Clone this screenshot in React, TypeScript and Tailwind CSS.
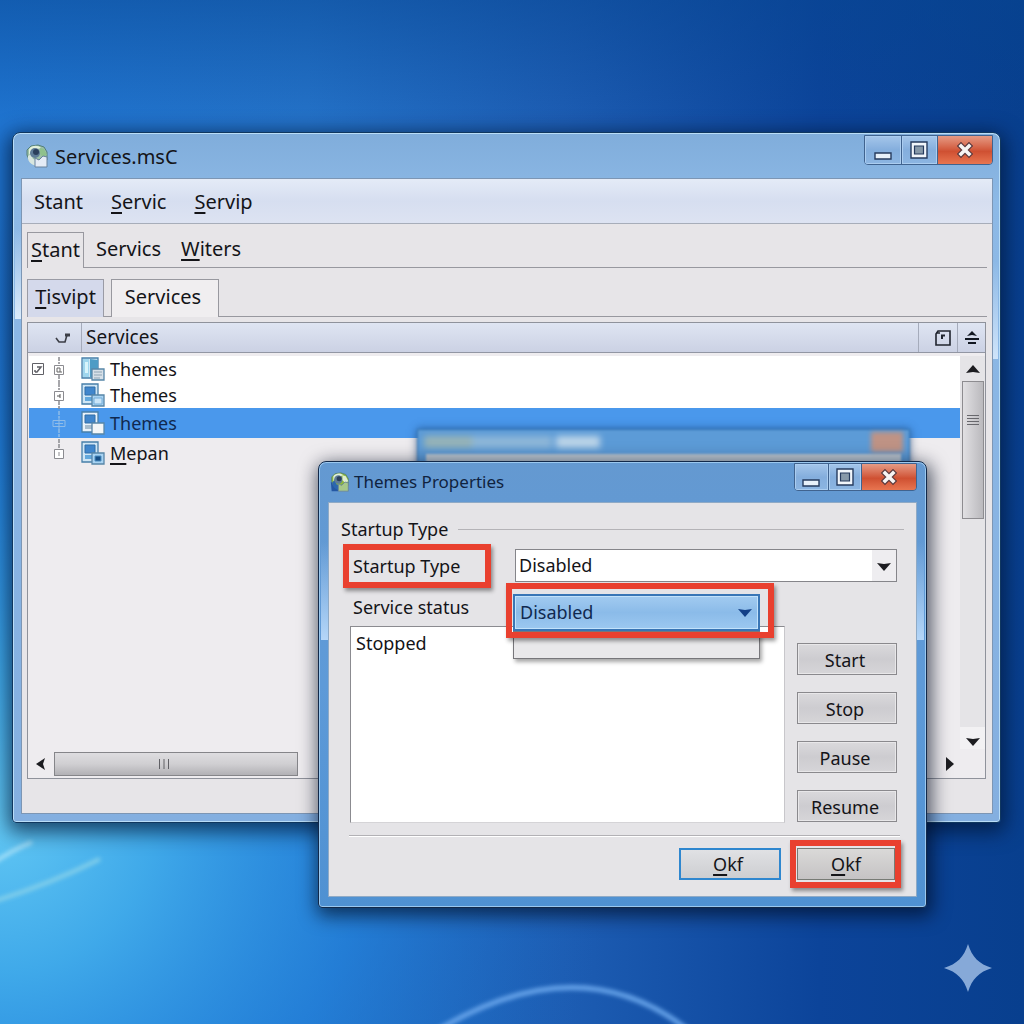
import React from "react";

const services = [
  { name: "Themes", kind: "tower", root: true, selected: false },
  { name: "Themes", kind: "doc", root: false, selected: false },
  { name: "Themes", kind: "light", root: false, selected: true },
  { name: "Mepan", kind: "gear", root: false, selected: false },
];

const actions = ["Start", "Stop", "Pause", "Resume"];

function Key({ text }: { text: string }) {
  return (
    <span>
      <span className="underline decoration-2 underline-offset-3">{text[0]}</span>
      {text.slice(1)}
    </span>
  );
}

function AppIcon({ small }: { small?: boolean }) {
  return (
    <svg viewBox="0 0 24 24" className={small ? "size-5" : "size-6"} aria-hidden="true">
      {small && <path d="M1 12l9 3v8H2z" fill="#2457a3" />}
      <path d="M2 6l4-4 7-1 6 2 3 5v8H12l-3 4-5-4-2-5z" fill={small ? "#8db83c" : "#9cc0a6"} stroke="#547f78" strokeWidth="1" />
      <path d="M3 12c-1 5 3 9 9 10l1-6-5-1-2-5z" fill={small ? "#2b67ae" : "#d8e6df"} />
      <path d="M4 5c3-4 9-4 12-1l-4 1-5 1-3 5z" fill="#e2f1dc" />
      <circle cx="10" cy="9" r="5" fill="#5f7c98" />
      <circle cx="11" cy="8" r="3" fill="#2b3f5c" />
      <path d="M15 4l4 1 3 6-4 2-3-3z" fill={small ? "#dfeed2" : "#8fc18c"} />
      <path d="M10 14l4 2 4-4 4 1v10H10z" fill={small ? "#a7c889" : "#e4ebf6"} stroke="#68829d" strokeWidth="1" />
    </svg>
  );
}

function ServiceIcon({ kind }: { kind: string }) {
  return (
    <svg viewBox="0 0 24 24" className="size-6 shrink-0" aria-hidden="true">
      <path d="M1 1h16v20H1z" fill={kind === "light" ? "#e8f2fa" : "#cfe6f5"} stroke="#477fa9" strokeWidth="1.3" />
      {kind === "tower" ? (
        <g>
          <path d="M2 2h6v18H2z" fill="#9fd6ee" />
          <path d="M9 2l8 1v18l-8-1z" fill="#4e9cc5" />
          <path d="M4 5h3v11H4z" fill="#d8f4fb" />
        </g>
      ) : (
        <g>
          <path d="M4 4h10v8H4z" fill="#4086cc" stroke="#316fa8" strokeWidth="1" />
          <path d="M4 14h7v4H4z" fill={kind === "light" ? "#a5bccd" : "#62a8dc"} />
        </g>
      )}
      <path d="M11 12h12v11H11z" fill={kind === "tower" ? "#d7e0e8" : kind === "light" ? "#f2f6f8" : "#a8d3f2"} stroke="#5786a8" strokeWidth="1.3" />
      {kind === "tower" && <path d="M13 15h8M13 18h8M13 21h6" stroke="#8ea4b4" />}
      {kind === "doc" && <path d="M13 15h8v6h-8z" fill="#cae5f8" stroke="#74add9" />}
      {kind === "gear" && <path d="M14 15h6v5h-6z" fill="#174f86" stroke="#4d8fc2" />}
    </svg>
  );
}

function TreeNode({ kind }: { kind: string }) {
  const light = kind === "light";
  return (
    <svg viewBox="0 0 16 28" className="h-7 w-4" fill="none" stroke={light ? "#8fbce8" : "#8b8b90"} aria-hidden="true">
      <path d={kind === "gear" ? "M8 0v9" : "M8 2v7M8 20v8"} strokeDasharray="4 1" strokeWidth="1.5" />
      {light ? (
        <path d="M2 11.5h12v6H2zM8 9v11M4 14.5h8" />
      ) : (
        <path d="M3.500 10.500h9v9h-9z" fill="#fff" />
      )}
      {kind === "tower" && <path d="M6 13h3v4H6zM9 17h2" stroke="#666" />}
      {kind === "doc" && <path d="M6 15h3M9 13v4" stroke="#555" />}
      {kind === "gear" && <path d="M8 13v4" />}
    </svg>
  );
}

function WindowButtons({ tall }: { tall?: boolean }) {
  return (
    <div
      className={
        "flex self-start overflow-hidden rounded-b border border-[#40638f] " +
        (tall ? "mt-0.5 h-[30px] w-[129px]" : "mt-px h-7 w-[123px]")
      }
    >
      <button aria-label="Minimize" className="flex flex-1 items-center justify-center border-r border-[#40638f] bg-linear-to-b from-[#a5c6ea] via-[#84aedd] to-[#8cb5e2] pt-1 inset-ring inset-ring-[#abcdf0]">
        <svg viewBox="0 0 18 18" className="size-[18px]">
          <path d="M1 10h16v6H1z" fill="#e8f1fa" stroke="#263b5e" strokeWidth="1.4" />
        </svg>
      </button>
      <button aria-label="Maximize" className="flex flex-1 items-center justify-center border-r border-[#40638f] bg-linear-to-b from-[#a5c6ea] via-[#84aedd] to-[#8cb5e2] inset-ring inset-ring-[#abcdf0]">
        <svg viewBox="0 0 18 18" className="size-[18px]">
          <path d="M1 1h16v16H1z" fill="#f1f6fb" stroke="#263b5e" strokeWidth="1.4" />
          <path d="M4.500 5h9v8h-9z" fill="#8799a9" stroke="#263b5e" strokeWidth="1.2" />
        </svg>
      </button>
      <button aria-label="Close" className="flex w-[54px] items-center justify-center bg-linear-to-b from-[#e59a84] via-[#cf5032] via-55% to-[#e87550]">
        <svg viewBox="0 0 18 18" className="size-[18px]" fill="none" strokeLinecap="square">
          <path d="M5 5l8 8M13 5L5 13" stroke="#5b3a3e" strokeWidth="6" />
          <path d="M5 5l8 8M13 5L5 13" stroke="#f7f4f3" strokeWidth="3.600" />
        </svg>
      </button>
    </div>
  );
}

function Arrow({ direction, blue }: { direction: string; blue?: boolean }) {
  const paths: Record<string, string> = {
    up: "M0 11l7-8 7 8-7-1z",
    down: "M0 4l7 1 7-1-7 8z",
    left: "M11 1L2 7l9 6-2-6z",
    right: "M3 0v14l8-7z",
  };
  return (
    <svg viewBox="0 0 14 14" className="size-3.5" aria-hidden="true">
      <path d={paths[direction]} fill={blue ? "#123f87" : "#1c1c20"} />
    </svg>
  );
}

function Wallpaper() {
  return (
    <svg viewBox="0 0 1024 1024" preserveAspectRatio="none" className="absolute inset-0 size-full" aria-hidden="true">
      <defs>
        <linearGradient id="base">
          <stop offset="0" stopColor="#1f74d0" />
          <stop offset="0.3" stopColor="#2472c8" />
          <stop offset="0.55" stopColor="#1d5db3" />
          <stop offset="0.8" stopColor="#0c449a" />
          <stop offset="1" stopColor="#083f8e" />
        </linearGradient>
        <linearGradient id="top" x1="0" y1="0" x2="0" y2="1">
          <stop offset="0" stopColor="#064591" stopOpacity="0.5" />
          <stop offset="0.12" stopColor="#064591" stopOpacity="0" />
        </linearGradient>
        <radialGradient id="glow" cx="0" cy="0.8" r="0.6">
          <stop offset="0" stopColor="#62c8f4" />
          <stop offset="0.25" stopColor="#41aceb" stopOpacity="0.95" />
          <stop offset="0.6" stopColor="#2386e0" stopOpacity="0.6" />
          <stop offset="1" stopColor="#1964bd" stopOpacity="0" />
        </radialGradient>
        <filter id="soft"><feGaussianBlur stdDeviation="2" /></filter>
      </defs>
      <path d="M0 0h1024v1024H0z" fill="url(#base)" />
      <path d="M0 0h1024v1024H0z" fill="url(#top)" />
      <path d="M0 0h1024v1024H0z" fill="url(#glow)" />
      <g fill="none" filter="url(#soft)">
        <path d="M-8 864Q12 850 32 842" stroke="#a5e0f8" strokeWidth="4" />
        <path d="M-8 902Q50 884 100 859" stroke="#85d0ea" strokeWidth="4" />
        <path d="M438 1030Q580 945 688 1030" stroke="#67a4ea" strokeWidth="5" />
      </g>
    </svg>
  );
}

function ServicesWindow() {
  return (
    <section className="absolute top-[132px] right-[23px] left-3 rounded-t-lg rounded-b border border-[#10375f] bg-linear-to-b from-[#80addb] from-0% via-[#8db9e6] via-10% to-[#84afe0] to-100% pr-[7px] pb-2 pl-2 shadow-[0_5px_20px_4px_rgba(0,20,50,0.7)] inset-ring inset-ring-[#b9ddf7]">
      {/* glass highlights down the side frames */}
      <div className="pointer-events-none absolute top-24 left-0.5 h-[90px] w-1.5 bg-linear-to-b from-transparent to-[#dcecfb]" />
      <div className="pointer-events-none absolute top-32 right-0.5 h-[98px] w-[5px] bg-linear-to-b from-transparent to-[#cfe4fa]" />

      <header className="flex h-[45px] items-center pl-1">
        <AppIcon />
        <h1 className="flex-1 pt-0.5 pl-1.5 text-[20px]">Services.msC</h1>
        <WindowButtons tall />
      </header>

      <div className="border border-[#7d96b4] bg-[#e7e5e8]">
        <nav className="flex h-[45px] items-center gap-7 border-b border-[#a7adb9] bg-linear-to-b from-[#e4ebf7] via-[#d6def0] to-[#dde3f2] pt-0.5 pl-3 text-[20px]">
          <button>Stant</button>
          <button><Key text="Servic" /></button>
          <button><Key text="Servip" /></button>
        </nav>

        <div className="px-[5px]">
          <nav className="flex h-11 items-end text-[20px]">
            <button className="h-9 border border-b-0 border-[#98989f] px-[3px] pb-0.5"><Key text="Stant" /></button>
            <div className="flex h-9 flex-1 items-center gap-5 border-b border-[#98989f] pb-0.5 pl-3">
              <button>Servics</button>
              <button><Key text="Witers" /></button>
            </div>
          </nav>

          <div className="flex h-[49px] items-end text-[20px]" role="tablist">
            <button role="tab" aria-selected="false" className="h-[38px] w-[77px] border border-b-0 border-[#9a9ba5] bg-[#d4d9eb] pb-1"><Key text="Tisvipt" /></button>
            <div className="h-[38px] w-[7px] border-b border-[#98989f]" />
            <button role="tab" aria-selected="true" className="h-[38px] w-[108px] border border-b-0 border-[#98989f] bg-[#f0eef0] pr-1 pb-1">Services</button>
            <div className="h-[38px] flex-1 border-b border-[#98989f]" />
          </div>

          <div className="mt-[5px] mr-px mb-[34px] border border-[#8f929b] bg-[#eeecef]">
            <div className="flex h-[30px] items-stretch border-b border-[#9296a3] bg-linear-to-b from-[#dfe5f2] to-[#cbd1e4] text-[19px]">
              <div className="flex w-[54px] items-center justify-center border-r border-[#a5abbb] pl-4">
                <svg viewBox="0 0 16 12" className="h-3 w-4" fill="none" stroke="#3b3d45" strokeWidth="1.6">
                  <path d="M1 6l3 4h6l2-7" />
                  <path d="M10 3h5" strokeWidth="3" />
                </svg>
              </div>
              <h2 className="flex flex-1 items-center pl-1">Services</h2>
              <button aria-label="View" className="flex w-[39px] items-center justify-end border-l border-[#a5abbb] pr-1.5">
                <svg viewBox="0 0 16 16" className="size-4" fill="none" stroke="#20242e" strokeWidth="1.6">
                  <path d="M1 4l2-3h12v14H1zM1 3h4" />
                  <path d="M7 9V5.500h3" strokeWidth="2" />
                </svg>
              </button>
              <button aria-label="Sort" className="flex w-7 items-center justify-center border-l border-[#a5abbb]">
                <svg viewBox="0 0 14 16" className="h-4 w-3.5" fill="#111620">
                  <path d="M2 6l5-5 5 5-5-1zM0 8h14v2H0zM3 12h8v2H3z" />
                </svg>
              </button>
            </div>

            <div className="mt-[3px] flex h-[393px]">
              <ul className="flex-1">
                {services.map((s, i) => (
                  <li
                    key={i}
                    className={
                      "ml-px flex items-center text-[18px] leading-none " +
                      (s.selected ? "h-[30px] bg-[#4a98ec] text-[#10294f]" : i < 2 ? "h-[26px] bg-white" : "h-[30px]")
                    }
                  >
                    <span className="flex w-[52px] items-center justify-between pr-3.5">
                      {s.root ? (
                        <svg viewBox="0 0 14 14" className="ml-0.5 size-3.5" fill="none" stroke="#606066">
                          <path d="M1.500 1.500h11v11h-11z" />
                          <path d="M4 10h2l4-5H6M4 8v2" strokeWidth="1.500" />
                        </svg>
                      ) : <span />}
                      <TreeNode kind={s.kind} />
                    </span>
                    <ServiceIcon kind={s.kind} />
                    <span className="pl-[5px]">{s.name === "Mepan" ? <Key text={s.name} /> : s.name}</span>
                  </li>
                ))}
              </ul>
              <div className="flex w-[25px] flex-col items-center bg-[#e5e4e7]">
                <button aria-label="Scroll up" className="flex h-[25px] items-center"><Arrow direction="up" /></button>
                <div className="flex h-[138px] w-[22px] justify-center border border-[#8d8c90] bg-linear-to-r from-[#e1e0e3] to-[#bab9bd] pt-8">
                  <svg viewBox="0 0 12 12" className="size-3" stroke="#68686d">
                    <path d="M0 1.500h12M0 4.500h12M0 7.500h12M0 10.500h12" />
                  </svg>
                </div>
                <button aria-label="Scroll down" className="mt-auto flex h-[22px] w-full items-end justify-center bg-[#f2f1f3] pb-px"><Arrow direction="down" /></button>
              </div>
            </div>
            <div className="flex h-[29px] items-center pr-7 pl-1.5">
              <button aria-label="Scroll left"><Arrow direction="left" /></button>
              <div className="ml-1.5 flex h-6 w-[244px] items-center justify-center border border-[#858589] bg-linear-to-b from-[#dedde0] via-[#d0cfd2] to-[#b2b1b5] pr-6">
                <svg viewBox="0 0 12 12" className="size-3" stroke="#606065">
                  <path d="M1.500 1v10M6 1v10M10.500 1v10" />
                </svg>
              </div>
              <button aria-label="Scroll right" className="ml-auto"><Arrow direction="right" /></button>
            </div>
          </div>
        </div>
      </div>
    </section>
  );
}

function GhostWindow() {
  return (
    <div className="absolute top-[429px] right-[114px] left-[417px] h-12 border border-[#3374b3] bg-[#5c9bd7] shadow-[0_0_8px_rgba(20,60,110,0.7)] blur-[1px]">
      <div className="flex h-6 items-center justify-between px-1.5">
        <div className="flex blur-[3px]">
          <div className="h-3 w-12 bg-[#98b4b7]" />
          <div className="h-3 w-20 bg-[#8fb7d8]" />
          <div className="ml-1 h-3 w-11 bg-[#bdd5e8]" />
        </div>
        <div className="h-5 w-8 bg-[#bf9385] blur-[2px]" />
      </div>
      <div className="mr-2 ml-2 h-6 bg-[#bcc8d3]" />
    </div>
  );
}

function PropertiesDialog() {
  const [type, setType] = React.useState("Disabled");
  const [status, setStatus] = React.useState("Disabled");

  return (
    <section role="dialog" aria-label="Themes Properties" className="absolute top-[461px] right-[97px] left-[318px] rounded-t-lg rounded-b border border-[#12294a] bg-linear-to-b from-[#6499d1] via-[#5e9ad8] to-[#4f91d2] px-[9px] pb-2.5 shadow-[2px_5px_18px_3px_rgba(0,10,30,0.65)] inset-ring inset-ring-[#9bc8ef]">
      <div className="pointer-events-none absolute top-20 left-0.5 h-[98px] w-[7px] bg-linear-to-b from-transparent to-[#b5d6f8]" />
      <div className="pointer-events-none absolute top-20 right-0.5 h-[98px] w-[7px] bg-linear-to-b from-transparent to-[#b5d6f8]" />

      <header className="flex h-10 items-center pl-0.5">
        <AppIcon small />
        <h2 className="flex-1 pl-1 text-[17px] text-[#10233f]">Themes Properties</h2>
        <WindowButtons />
      </header>

      <div className="border border-[#8faac6] bg-[#e5e4e7] text-[18px]">
        <div className="flex items-center pt-3 pr-3 pl-3">
          <h3 className="leading-7">Startup Type</h3>
          <div className="ml-2.5 flex-1 border-t border-[#b4b3b7]" />
        </div>

        <div className="mt-1.5 flex items-center pr-[19px] pl-6">
          <div className="relative w-[130px]">
            <label htmlFor="startup" className="block leading-7">Startup Type</label>
            <div className="pointer-events-none absolute -inset-y-2 -right-2 -left-2.5 border-6 border-[#e9402f] shadow-[2px_3px_4px_rgba(0,0,0,0.4)]" />
          </div>
          <div className="relative ml-8 flex-1">
            <select id="startup" value={type} onChange={(e) => setType(e.target.value)} className="block h-[33px] w-full appearance-none border border-[#85858a] bg-white pl-[3px]">
              <option>Disabled</option>
              <option>Manual</option>
            </select>
            <div className="pointer-events-none absolute inset-y-px right-px flex w-6 items-center justify-center bg-[#eeedf0]"><Arrow direction="down" /></div>
          </div>
        </div>

        <div className="flex h-11 items-center pl-[22px]">
          <label htmlFor="status" className="w-[162px] pt-1.5 pl-0.5 leading-none">Service status</label>
          <div className="relative z-10 mt-4 w-[247px]">
            <select id="status" value={status} onChange={(e) => setStatus(e.target.value)} className="block h-[37px] w-full appearance-none border-2 border-[#3976b6] bg-linear-to-b from-[#a2cbf0] via-[#8bbbe9] to-[#9bc8f0] pl-[5px] text-[#10294f] inset-ring inset-ring-[#c2e2fb]">
              <option>Disabled</option>
              <option>Manual</option>
            </select>
            <div className="pointer-events-none absolute inset-y-0 right-2 flex items-center"><Arrow direction="down" blue /></div>
            <div className="absolute inset-x-0 top-full h-7 border border-[#77767a] bg-[#e9e8ea] shadow-[2px_3px_4px_rgba(0,0,0,0.35)]" />
            <div className="pointer-events-none absolute -top-[11px] -right-3.5 -bottom-[7px] -left-[7px] border-6 border-[#e9402f] shadow-[2px_3px_4px_rgba(0,0,0,0.4)]" />
          </div>
        </div>

        <div className="flex gap-3 pr-[19px] pl-[21px]">
          <ul className="h-[197px] flex-1 border border-[#8b8b90] border-r-[#c8c7cb] border-b-[#d5d4d7] bg-white pl-[5px]">
            <li className="leading-8">Stopped</li>
          </ul>
          <div className="flex w-[100px] flex-col gap-[17px] pt-[17px]">
            {actions.map((a) => (
              <button key={a} className="h-8 border border-[#8a898d] bg-linear-to-b from-[#dad9dc] via-[#cdccd0] to-[#d6d5d8] pt-0.5 pr-1 leading-none inset-ring inset-ring-[#e8e7e9]">
                {a}
              </button>
            ))}
          </div>
        </div>

        <div className="mt-3 mr-4 ml-5 border-t border-b border-t-[#b2b1b5] border-b-white" />

        <div className="flex justify-end gap-4 pt-[11px] pr-[21px] pb-4">
          <button className="h-8 w-[102px] border-2 border-[#2f87cf] bg-linear-to-b from-[#e0e1e4] to-[#cdced1] pr-1 leading-none"><Key text="Okf" /></button>
          <div className="relative">
            <button className="h-8 w-[98px] border border-[#777b75] bg-linear-to-b from-[#dad9d8] to-[#c5c3c4] leading-none"><Key text="Okf" /></button>
            <div className="pointer-events-none absolute -top-2 -right-1.5 -bottom-2 -left-[7px] border-6 border-[#e9402f] shadow-[2px_3px_4px_rgba(0,0,0,0.4)]" />
          </div>
        </div>
      </div>
    </section>
  );
}

export default function App() {
  return (
    <main className="relative min-h-screen overflow-hidden bg-[#1660b8] font-['Noto_Sans',sans-serif] text-[#141418]">
      <Wallpaper />
      <ServicesWindow />
      <GhostWindow />
      <PropertiesDialog />
      <svg viewBox="0 0 48 48" className="absolute right-8 bottom-8 size-12" aria-hidden="true">
        <path d="M24 0C28 13 35 20 48 24C35 28 28 35 24 48C20 35 13 28 0 24C13 20 20 13 24 0z" fill="#86a9d8" />
      </svg>
    </main>
  );
}
